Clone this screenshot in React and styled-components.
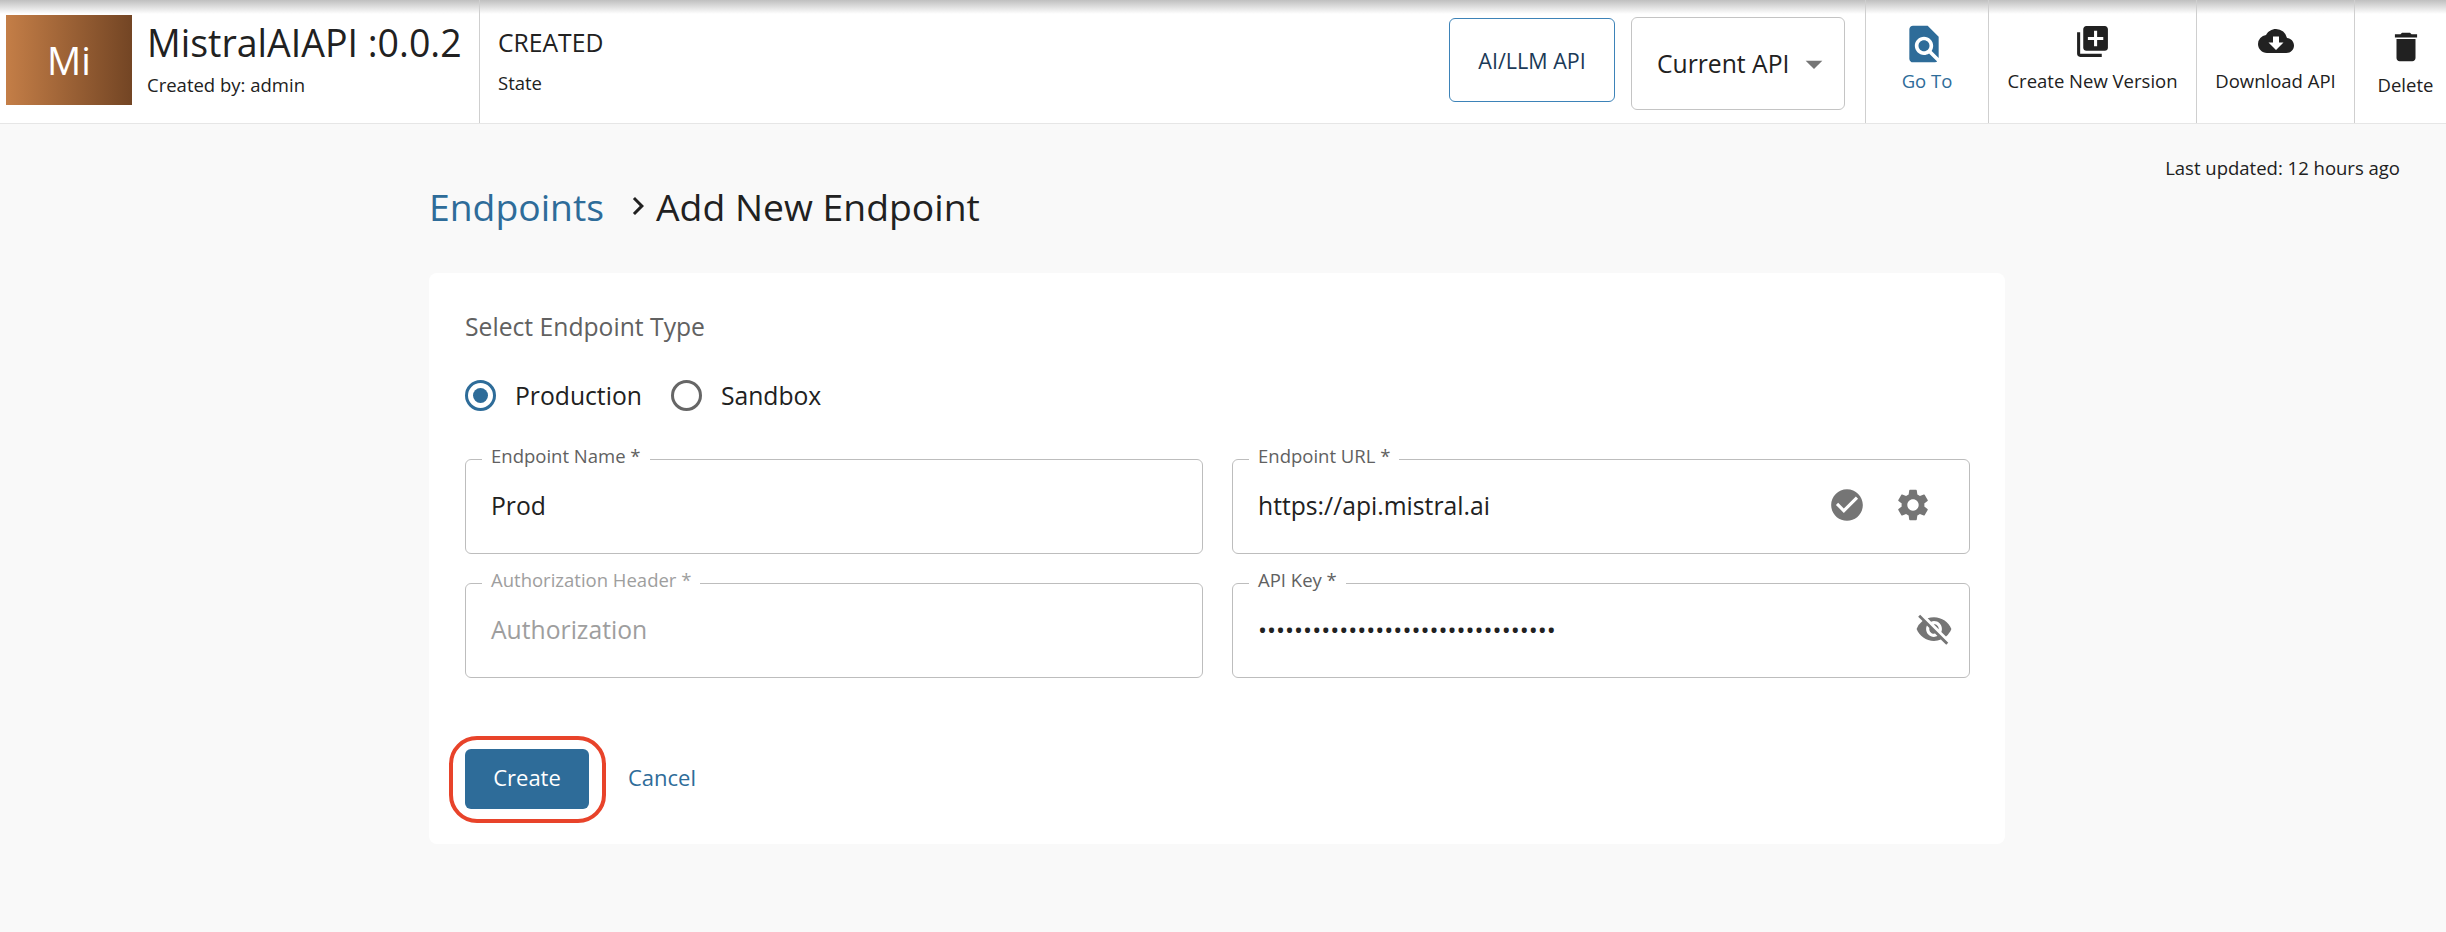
import React from 'react'
import styled, { createGlobalStyle } from 'styled-components'
import {
  MdFindInPage,
  MdLibraryAdd,
  MdCloudDownload,
  MdDelete,
  MdCheckCircle,
  MdSettings,
  MdVisibilityOff,
  MdArrowDropDown,
  MdChevronRight,
} from 'react-icons/md'

const blue = '#2e6c99'

const GlobalStyle = createGlobalStyle`
  html, body {
    margin: 0;
    padding: 0;
    background: #f9f9f9;
    font-family: "Open Sans", "Liberation Sans", sans-serif;
    color: #212121;
    overflow: hidden;
  }
  * { box-sizing: border-box; }
`

const Header = styled.header`
  display: flex;
  align-items: stretch;
  height: 124px;
  background: linear-gradient(#bfbfbf, #fff 14px);
  border-bottom: 1px solid #e6e6e6;
`

const Thumb = styled.div`
  flex: none;
  align-self: flex-start;
  width: 126px;
  height: 90px;
  margin: 15px 0 0 6px;
  display: flex;
  align-items: center;
  justify-content: center;
  background: linear-gradient(90deg, #c47e47, #734524);
  color: #fff;
  font-size: 38px;
`

const TitleBlock = styled.div`
  flex: none;
  width: 348px;
  padding: 17px 0 0 15px;
  border-right: 1px solid #cfcfcf;
`

const ApiName = styled.div`
  font-size: 37.5px;
  line-height: 52px;
  white-space: nowrap;
`

const SubText = styled.div`
  font-size: 18.5px;
  line-height: 28px;
  margin-top: ${(p) => p.$top || 0}px;
`

const StateBlock = styled.div`
  flex: 1;
  padding: 25px 0 0 18px;
`

const StateValue = styled.div`
  font-size: 24.7px;
  line-height: 36px;
`

const Controls = styled.div`
  display: flex;
  align-items: flex-start;
  gap: 16px;
  padding: 18px 20px 0 0;
`

const TypeButton = styled.button`
  width: 166px;
  height: 84px;
  background: #fff;
  border: 1px solid #3d83b8;
  border-radius: 6px;
  color: #1b3a57;
  font: inherit;
  font-size: 21.5px;
`

const VersionSelect = styled.div`
  width: 214px;
  height: 93px;
  margin-top: -1px;
  display: flex;
  align-items: center;
  justify-content: space-between;
  padding: 0 10px 0 25px;
  background: #fff;
  border: 1px solid #c4c4c4;
  border-radius: 6px;
  font-size: 24.7px;
  color: #212121;
  svg { color: #757575; }
`

const Action = styled.div`
  flex: none;
  width: ${(p) => p.$width}px;
  padding-left: ${(p) => p.$shift || 0}px;
  display: flex;
  flex-direction: column;
  align-items: center;
  border-left: 1px solid #cfcfcf;
  color: ${(p) => (p.$active ? blue : '#212121')};
`

const ActionIcon = styled.div`
  height: 38px;
  margin-top: ${(p) => p.$top}px;
  margin-right: ${(p) => p.$nudge || 0}px;
  display: flex;
  align-items: center;
  justify-content: center;
`

const ActionLabel = styled.div`
  font-size: 18.5px;
  line-height: 26px;
  margin-top: ${(p) => p.$gap}px;
  white-space: nowrap;
`

const Main = styled.main`
  width: 1576px;
  margin-left: 429px;
  padding-top: 32px;
`

const Updated = styled.div`
  width: 1971px;
  text-align: right;
  font-size: 18.5px;
  line-height: 24px;
`

const Breadcrumb = styled.div`
  display: flex;
  align-items: center;
  height: 48px;
  margin-top: 2px;
  font-size: 37.3px;
`

const CrumbLink = styled.a`
  color: ${blue};
`

const CrumbArrow = styled.span`
  display: flex;
  margin-left: 16px;
  svg { display: block; }
`

const CrumbCurrent = styled.span`
  color: #212121;
`

const Card = styled.section`
  margin-top: 43px;
  padding: 38px 35px 35px 36px;
  background: #fff;
  border-radius: 8px;
`

const SectionLabel = styled.div`
  font-size: 24.7px;
  line-height: 32px;
  color: #616161;
`

const RadioRow = styled.div`
  display: flex;
  align-items: center;
  height: 40px;
  margin-top: 32px;
  margin-bottom: 29px;
`

const RadioItem = styled.label`
  display: flex;
  align-items: center;
  gap: 19px;
  font-size: 24.7px;
  margin-right: 29px;
`

const RadioCircle = styled.span`
  width: 31px;
  height: 31px;
  border-radius: 50%;
  border: 3px solid ${(p) => (p.$checked ? blue : '#666')};
  display: flex;
  align-items: center;
  justify-content: center;
  &::after {
    content: '';
    display: ${(p) => (p.$checked ? 'block' : 'none')};
    width: 15px;
    height: 15px;
    border-radius: 50%;
    background: ${blue};
  }
`

const FieldGrid = styled.div`
  display: grid;
  grid-template-columns: 738px 738px;
  column-gap: 29px;
  row-gap: 14px;
`

const Field = styled.fieldset`
  margin: 0;
  padding: 0 23px 0 25px;
  height: 110px;
  min-width: 0;
  border: 1px solid #bdbdbd;
  border-radius: 6px;
`

const Legend = styled.legend`
  margin-left: -9px;
  padding: 0 9px 6px;
  font-size: 18.5px;
  line-height: 24px;
  color: ${(p) => (p.$muted ? '#9e9e9e' : '#616161')};
`

const FieldRow = styled.div`
  width: 100%;
  height: 62px;
  display: flex;
  align-items: center;
  justify-content: space-between;
`

const FieldValue = styled.span`
  font-size: 24.7px;
  color: ${(p) => (p.$muted ? '#9e9e9e' : '#212121')};
`

const Dots = styled.span`
  font-size: 24px;
  color: #212121;
`

const FieldIcons = styled.span`
  display: flex;
  align-items: center;
  gap: 28px;
  color: #757575;
  margin-right: ${(p) => p.$right || 0}px;
`

const Actions = styled.div`
  display: flex;
  align-items: center;
  margin-top: 71px;
`

const ButtonWrap = styled.div`
  position: relative;
  margin-right: 39px;
`

const Ring = styled.span`
  position: absolute;
  inset: -13px -17px -14px -16px;
  border: 4px solid #e8432a;
  border-radius: 28px;
  pointer-events: none;
`

const PrimaryButton = styled.button`
  display: block;
  width: 124px;
  height: 60px;
  padding: 0 0 4px;
  border: 0;
  border-radius: 6px;
  background: ${blue};
  color: #fff;
  font: inherit;
  font-size: 22px;
`

const CancelLink = styled.a`
  padding-bottom: 5px;
  font-size: 22px;
  color: ${blue};
`

const actions = [
  { label: 'Go To', width: 123, Icon: MdFindInPage, size: 44, top: 25, gap: 5, active: true, nudge: 6 },
  { label: 'Create New Version', width: 208, Icon: MdLibraryAdd, size: 37, top: 22, gap: 8 },
  { label: 'Download API', width: 158, Icon: MdCloudDownload, size: 36, top: 22, gap: 8 },
  { label: 'Delete', width: 92, Icon: MdDelete, size: 38, top: 28, gap: 6, shift: 10 },
]

const App = () => {
  return (
    <>
      <GlobalStyle />
      <Header>
        <Thumb>Mi</Thumb>
        <TitleBlock>
          <ApiName>MistralAIAPI :0.0.2</ApiName>
          <SubText $top={2}>Created by: admin</SubText>
        </TitleBlock>
        <StateBlock>
          <StateValue>CREATED</StateValue>
          <SubText $top={8}>State</SubText>
        </StateBlock>
        <Controls>
          <TypeButton>AI/LLM API</TypeButton>
          <VersionSelect>
            Current API
            <MdArrowDropDown size={40} />
          </VersionSelect>
        </Controls>
        {actions.map(({ label, width, Icon, size, top, gap, active, shift, nudge }) => (
          <Action key={label} $width={width} $active={active} $shift={shift}>
            <ActionIcon $top={top} $nudge={nudge}>
              <Icon size={size} />
            </ActionIcon>
            <ActionLabel $gap={gap}>{label}</ActionLabel>
          </Action>
        ))}
      </Header>
      <Main>
        <Updated>Last updated: 12 hours ago</Updated>
        <Breadcrumb>
          <CrumbLink>Endpoints</CrumbLink>
          <CrumbArrow>
            <MdChevronRight size={36} />
          </CrumbArrow>
          <CrumbCurrent>Add New Endpoint</CrumbCurrent>
        </Breadcrumb>
        <Card>
          <SectionLabel>Select Endpoint Type</SectionLabel>
          <RadioRow>
            <RadioItem>
              <RadioCircle $checked />
              Production
            </RadioItem>
            <RadioItem>
              <RadioCircle />
              Sandbox
            </RadioItem>
          </RadioRow>
          <FieldGrid>
            <Field>
              <Legend>Endpoint Name *</Legend>
              <FieldRow>
                <FieldValue>Prod</FieldValue>
              </FieldRow>
            </Field>
            <Field>
              <Legend>Endpoint URL *</Legend>
              <FieldRow>
                <FieldValue>https://api.mistral.ai</FieldValue>
                <FieldIcons $right={14}>
                  <MdCheckCircle size={38} />
                  <MdSettings size={38} />
                </FieldIcons>
              </FieldRow>
            </Field>
            <Field>
              <Legend $muted>Authorization Header *</Legend>
              <FieldRow>
                <FieldValue $muted>Authorization</FieldValue>
              </FieldRow>
            </Field>
            <Field>
              <Legend>API Key *</Legend>
              <FieldRow>
                <Dots>{'•'.repeat(33)}</Dots>
                <FieldIcons $right={-7}>
                  <MdVisibilityOff size={38} />
                </FieldIcons>
              </FieldRow>
            </Field>
          </FieldGrid>
          <Actions>
            <ButtonWrap>
              <PrimaryButton>Create</PrimaryButton>
              <Ring />
            </ButtonWrap>
            <CancelLink>Cancel</CancelLink>
          </Actions>
        </Card>
      </Main>
    </>
  )
}

export default App
